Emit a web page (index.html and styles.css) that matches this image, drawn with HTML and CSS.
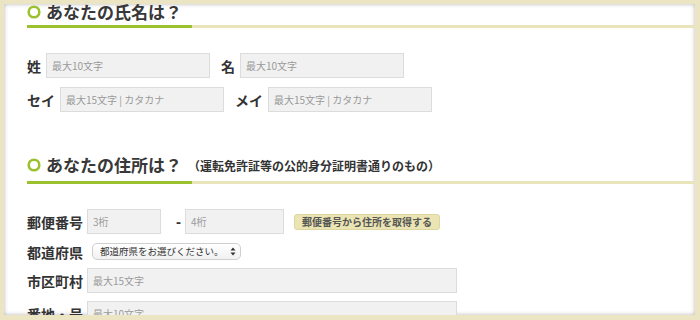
FILE: index.html
```html
<!DOCTYPE html>
<html>
<head>
  <title>お申し込みフォーム</title>
  <meta charset="UTF-8">
  <link rel="stylesheet" href="styles.css">
</head>
<body>
<div class="frame">

  <h2 class="heading headingFirst">
    <svg class="ring" width="14" height="14" viewBox="0 0 14 14"><circle cx="7" cy="7" r="5.3" fill="none" stroke="#9cc12e" stroke-width="2.6"/></svg>
    <span>あなたの氏名は？</span>
  </h2>
  <div class="rule"></div>

  <div class="row rowName1">
    <label class="field"><span class="label">姓</span><input type="text" class="inputText wName" placeholder="最大10文字"></label>
    <label class="field"><span class="label">名</span><input type="text" class="inputText wName" placeholder="最大10文字"></label>
  </div>
  <div class="row rowName2">
    <label class="field"><span class="label">セイ</span><input type="text" class="inputText wName" placeholder="最大15文字 | カタカナ"></label>
    <label class="field"><span class="label">メイ</span><input type="text" class="inputText wName" placeholder="最大15文字 | カタカナ"></label>
  </div>

  <h2 class="heading headingSecond">
    <svg class="ring" width="14" height="14" viewBox="0 0 14 14"><circle cx="7" cy="7" r="5.3" fill="none" stroke="#9cc12e" stroke-width="2.6"/></svg>
    <span>あなたの住所は？</span>
    <small class="note">（運転免許証等の公的身分証明書通りのもの）</small>
  </h2>
  <div class="rule"></div>

  <div class="row rowZip">
    <span class="label labelWide">郵便番号</span>
    <input type="text" class="inputText wZip1" placeholder="3桁">
    <span class="dash">-</span>
    <input type="text" class="inputText wZip2" placeholder="4桁">
    <button type="button" class="buttonZip">郵便番号から住所を取得する</button>
  </div>
  <div class="row rowPref">
    <span class="label labelWide">都道府県</span>
    <span class="selectWrap">
      <select class="selectPref">
        <option>都道府県をお選びください。</option>
      </select>
      <svg class="selectArrow" width="6" height="9" viewBox="0 0 6 9"><path d="M3 0.5 L5.5 3.5 H0.5 Z M3 8.5 L5.5 5.5 H0.5 Z" fill="#333"/></svg>
    </span>
  </div>
  <div class="row rowCity">
    <span class="label labelWide">市区町村</span>
    <input type="text" class="inputText wLong" placeholder="最大15文字">
  </div>
  <div class="row rowStreet">
    <span class="label labelWide">番地・号</span>
    <input type="text" class="inputText wLong" placeholder="最大10文字">
  </div>

</div>
</body>
</html>
```

FILE: styles.css
```css
html, body {
  margin: 0;
  padding: 0;
}

body {
  background: #ece5c3;
  font-family: "Noto Sans CJK JP", "Noto Sans", sans-serif;
  color: #333;
}

.frame {
  margin: 4px 5px 0 4px;
  height: 311px;
  background: #fff;
  box-shadow: inset 0 0 4px rgba(0,0,0,.3);
  padding-left: 23px;
  overflow: hidden;
}

.heading {
  display: flex;
  align-items: center;
  height: 22px;
  margin: 0;
  font-size: 17px;
  font-weight: bold;
  color: #383838;
  line-height: 22px;
}

.headingFirst {
  margin-top: -3px;
}

.headingSecond {
  margin-top: 42px;
}

.ring {
  margin-right: 5px;
  flex: none;
}

.note {
  font-size: 12px;
  margin-left: 6px;
  margin-top: 2px;
  color: #333;
}

.rule {
  height: 3px;
  margin-top: 5px;
  background: linear-gradient(to right, #9cc12e 0, #9cc12e 165px, #e9e5bb 165px);
}

.headingFirst + .rule {
  margin-top: 2px;
}

.row {
  display: flex;
  align-items: center;
  height: 25px;
}

.rowName1 { margin-top: 25px; }
.rowName2 { margin-top: 9px; }
.rowZip { margin-top: 25px; }
.rowPref { margin-top: 8px; height: 19px; }
.rowCity { margin-top: 7px; }
.rowStreet { margin-top: 8px; }

.field {
  display: flex;
  align-items: center;
  margin-right: 11px;
}

.label {
  font-size: 14px;
  font-weight: bold;
  color: #333;
  margin-right: 5px;
  white-space: nowrap;
}

.labelWide {
  width: 56px;
  margin-right: 4px;
}

.inputText {
  box-sizing: border-box;
  height: 25px;
  margin: 0;
  padding: 0 5px;
  border: 1px solid #dcdcdc;
  background: #f1f1f1;
  font-family: "Noto Sans CJK JP", "Noto Sans", sans-serif;
  font-size: 10px;
  color: #333;
  outline: none;
}

.inputText::placeholder {
  color: #9a9a9a;
}

.wName { width: 164px; }
.wZip1 { width: 74px; }
.wZip2 { width: 99px; }
.wLong { width: 370px; }

.dash {
  font-family: "Liberation Sans", sans-serif;
  font-size: 15px;
  font-weight: bold;
  margin: 0 4px 0 15px;
  width: 5px;
  text-align: center;
  color: #333;
}

.buttonZip {
  margin-left: 10px;
  height: 16px;
  width: 146px;
  padding: 0;
  border: 1px solid #ddd6a0;
  border-radius: 3px;
  background: #ebe5b3;
  font-family: "Noto Sans CJK JP", "Noto Sans", sans-serif;
  font-size: 10px;
  font-weight: bold;
  line-height: 14px;
  color: #555;
}

.selectWrap {
  position: relative;
  margin-left: 5px;
  display: flex;
  align-items: center;
  height: 17px;
}

.selectPref {
  display: block;
  -webkit-appearance: none;
  appearance: none;
  box-sizing: border-box;
  width: 149px;
  height: 17px;
  margin: 0;
  padding: 0 0 0 7px;
  border: 1px solid #cfcfcf;
  border-radius: 5px;
  background: linear-gradient(#fff, #f1f1f1);
  font-family: "Noto Sans CJK JP", "Noto Sans", sans-serif;
  font-size: 9.5px;
  line-height: 15px;
  color: #333;
  outline: none;
}

.selectArrow {
  position: absolute;
  right: 5px;
  top: 4px;
  pointer-events: none;
}
```
